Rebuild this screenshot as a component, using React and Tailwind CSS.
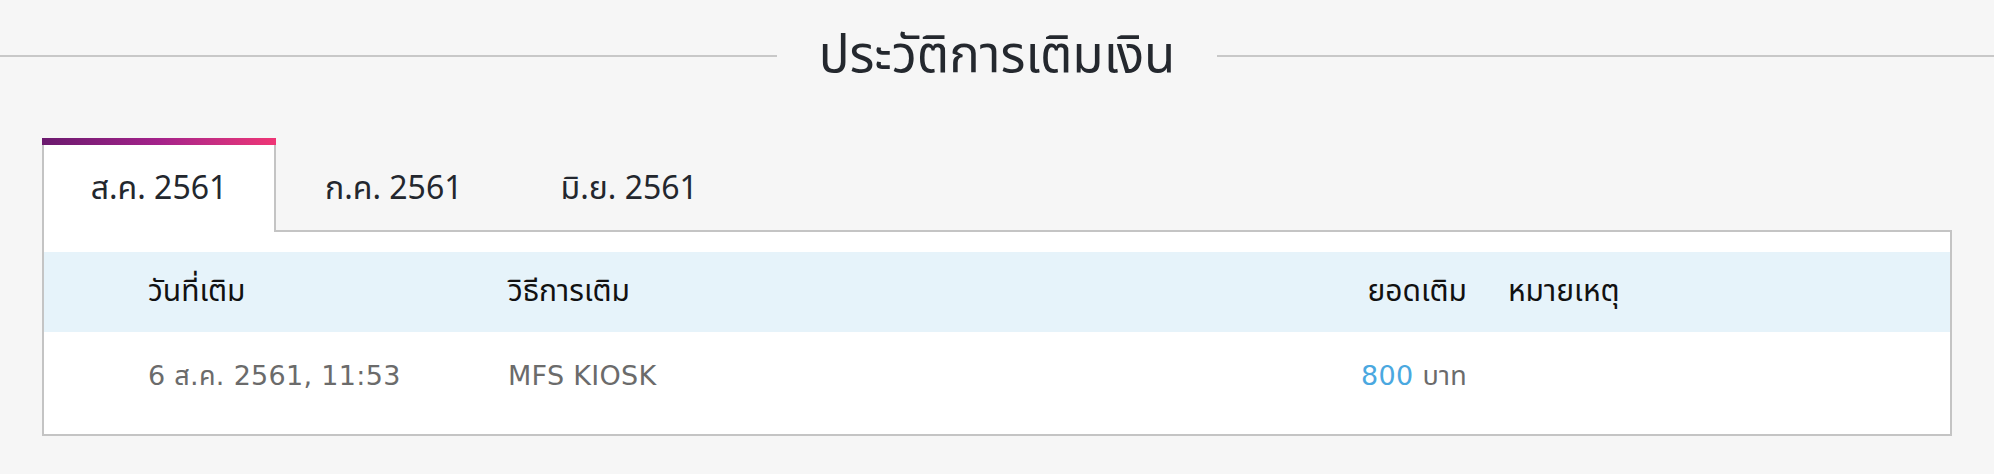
import React from 'react';

const tabs = ['ส.ค. 2561', 'ก.ค. 2561', 'มิ.ย. 2561'];

const rows = [{ date: '6 ส.ค. 2561, 11:53', method: 'MFS KIOSK', amount: 800, note: '' }];

export default function App() {
  return (
    <div className="min-h-[474px] w-full bg-[#f6f6f6] font-['Noto_Sans_Thai','Noto_Sans','Liberation_Sans',sans-serif]">
      {/* heading with side rules */}
      <div className="flex h-[112px] items-center">
        <div className="h-[2px] flex-1 bg-[#c8c8c8]" />
        <h1 className="mx-[42px] text-[51px] leading-none text-[#24282e]">ประวัติการเติมเงิน</h1>
        <div className="h-[2px] flex-1 bg-[#c8c8c8]" />
      </div>

      <div className="mx-[42px] mt-[26px]">
        {/* month tabs */}
        <div className="relative z-10 -mb-[2px] flex">
          {tabs.map((t, i) =>
            i === 0 ? (
              <div key={t} className="flex w-[234px] flex-col">
                <div className="h-[7px] bg-gradient-to-r from-[#6b1a6e] via-[#a4228a] to-[#ef3575]" />
                <div className="flex h-[87px] items-center justify-center border-x-2 border-[#c4c4c4] bg-white text-[32px] text-[#23272e]">
                  {t}
                </div>
              </div>
            ) : (
              <div key={t} className="mt-[7px] flex h-[87px] items-center px-[49px] text-[32px] text-[#23272e]">
                {t}
              </div>
            )
          )}
        </div>

        {/* history table */}
        <div className="border-2 border-[#c4c4c4] bg-white pt-[20px]">
          <div className="flex h-[80px] items-center bg-[#e6f3fa] pl-[104px] text-[30px] text-[#111]">
            <div className="w-[360px]">วันที่เติม</div>
            <div className="w-[759px]">วิธีการเติม</div>
            <div className="w-[200px] text-right">ยอดเติม</div>
            <div className="ml-[41px]">หมายเหตุ</div>
          </div>
          {rows.map((r) => (
            <div key={r.date} className="flex h-[102px] items-center pb-[14px] pl-[104px] font-['DejaVu_Sans','Noto_Sans_Thai',sans-serif] text-[27px] tracking-[0.3px] text-[#6b6b6b]">
              <div className="w-[360px]">{r.date}</div>
              <div className="w-[759px]">{r.method}</div>
              <div className="w-[200px] text-right">
                <span className="text-[#4aa8e0]">{r.amount}</span> บาท
              </div>
              <div className="ml-[41px]">{r.note}</div>
            </div>
          ))}
        </div>
      </div>
    </div>
  );
}
